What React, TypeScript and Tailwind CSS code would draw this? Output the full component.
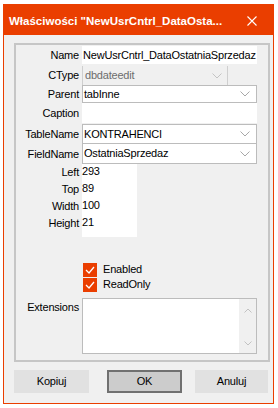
function Chevron({ color = "#a8a8a8" }: { color?: string }) {
  return (
    <svg width="10" height="6" viewBox="0 0 10 6">
      <polyline points="0.5,0.5 5,5 9.5,0.5" fill="none" stroke={color} strokeWidth="1" />
    </svg>
  );
}

function Label({ children }: { children?: React.ReactNode }) {
  return <div className="w-[66px] shrink-0 pr-[3px] text-right whitespace-nowrap">{children}</div>;
}

function Check({ label }: { label: string }) {
  return (
    <div className="flex h-[15px] items-center pl-[67px]">
      <div className="flex h-[14px] w-[14px] items-center justify-center bg-[#ea3e00]">
        <svg width="14" height="14" viewBox="0 0 14 14">
          <polyline points="3,7 6,10 11,4" fill="none" stroke="#ffffff" strokeWidth="1.3" />
        </svg>
      </div>
      <span className="ml-[6px]">{label}</span>
    </div>
  );
}

const numbers = [
  ["Left", "293"],
  ["Top", "89"],
  ["Width", "100"],
  ["Height", "21"],
];

export default function App() {
  return (
    <div className="h-[408px] w-[278px] bg-white pl-[3px] pt-[4px] font-['Liberation_Sans',Arial,sans-serif] text-[11px] leading-[13px] tracking-[-0.2px] text-black">
      <div className="flex h-[400px] w-[271px] flex-col border border-[#ea3e00] bg-[#f0f0f0]">
        {/* title bar */}
        <div className="flex h-[30px] shrink-0 items-center bg-[#ea3e00] pl-[5px] pr-[16px] text-white">
          <span className="pt-[2px] text-[11.5px] font-bold tracking-normal whitespace-nowrap">
            Właściwości "NewUsrCntrl_DataOsta...
          </span>
          <svg className="ml-auto mt-[2px]" width="10" height="10" viewBox="0 0 10 10">
            <path d="M0.5 0.5 L9.5 9.5 M9.5 0.5 L0.5 9.5" stroke="#ffffff" strokeWidth="1.1" />
          </svg>
        </div>

        <div className="pl-[10px] pt-[8px]">
          <div className="h-[319px] w-[256px] border-2 border-[#c6c6c6]">
            <div className="h-[1px]" />
            <div className="flex h-[18px] items-center">
              <Label>Name</Label>
              <div className="flex h-full w-[175px] items-center bg-white pl-[1px] whitespace-nowrap">
                NewUsrCntrl_DataOstatniaSprzedaz
              </div>
            </div>
            <div className="h-[2px]" />
            <div className="flex h-[19px] items-center">
              <Label>CType</Label>
              <div className="flex h-full w-[146px] items-center justify-between border-x border-[#cfcfcf] pl-[2px] pr-[5px] text-[#6d6d6d]">
                dbdateedit
                <Chevron color="#c4c4c4" />
              </div>
            </div>
            <div className="flex h-[18px] items-center">
              <Label>Parent</Label>
              <div className="flex h-full w-[175px] items-center justify-between border border-[#bcbcbc] bg-white pl-[1px] pr-[6px]">
                tabInne
                <Chevron />
              </div>
            </div>
            <div className="flex h-[20px] items-center">
              <Label>Caption</Label>
              <div className="h-full w-[175px] bg-white" />
            </div>
            <div className="h-[1px]" />
            <div className="flex h-[20px] items-center">
              <Label>TableName</Label>
              <div className="flex h-full w-[175px] items-center justify-between border border-[#bcbcbc] bg-white pl-[1px] pr-[6px]">
                KONTRAHENCI
                <Chevron />
              </div>
            </div>
            <div className="flex h-[20px] items-center">
              <Label>FieldName</Label>
              <div className="flex h-full w-[175px] items-center justify-between border-x border-b border-[#bcbcbc] bg-white pl-[1px] pr-[6px]">
                OstatniaSprzedaz
                <Chevron />
              </div>
            </div>
            {numbers.map(([name, value]) => (
              <div key={name} className="flex h-[17px] items-center">
                <Label>{name}</Label>
                <div className="flex h-full w-[55px] items-center bg-white pb-[2px]">{value}</div>
              </div>
            ))}
            <div className="flex h-[5px]">
              <Label />
              <div className="h-full w-[55px] bg-white" />
            </div>

            <div className="h-[25px]" />
            <Check label="Enabled" />
            <Check label="ReadOnly" />
            <div className="h-[6px]" />

            <div className="flex h-[56px] items-start">
              <div className="pt-[3px]">
                <Label>Extensions</Label>
              </div>
              <div className="flex h-full w-[175px] justify-end border border-[#bcbcbc] bg-white">
                <div className="flex w-[17px] flex-col items-center justify-between bg-[#f0f0f0] pb-[7px] pt-[9px]">
                  <svg width="8" height="5" viewBox="0 0 8 5">
                    <polyline points="0.5,4.5 4,1 7.5,4.5" fill="none" stroke="#c2c2c2" strokeWidth="1" />
                  </svg>
                  <svg width="8" height="5" viewBox="0 0 8 5">
                    <polyline points="0.5,0.5 4,4 7.5,0.5" fill="none" stroke="#c2c2c2" strokeWidth="1" />
                  </svg>
                </div>
              </div>
            </div>
          </div>

          <div className="mt-[8px] flex">
            <button className="h-[23px] w-[75px] bg-[#e1e1e1]">Kopiuj</button>
            <button className="ml-[18px] h-[23px] w-[75px] border-2 border-[#707070] bg-[#cccccc]">OK</button>
            <button className="ml-[13px] h-[23px] w-[73px] bg-[#e1e1e1]">Anuluj</button>
          </div>
        </div>
      </div>
    </div>
  );
}
